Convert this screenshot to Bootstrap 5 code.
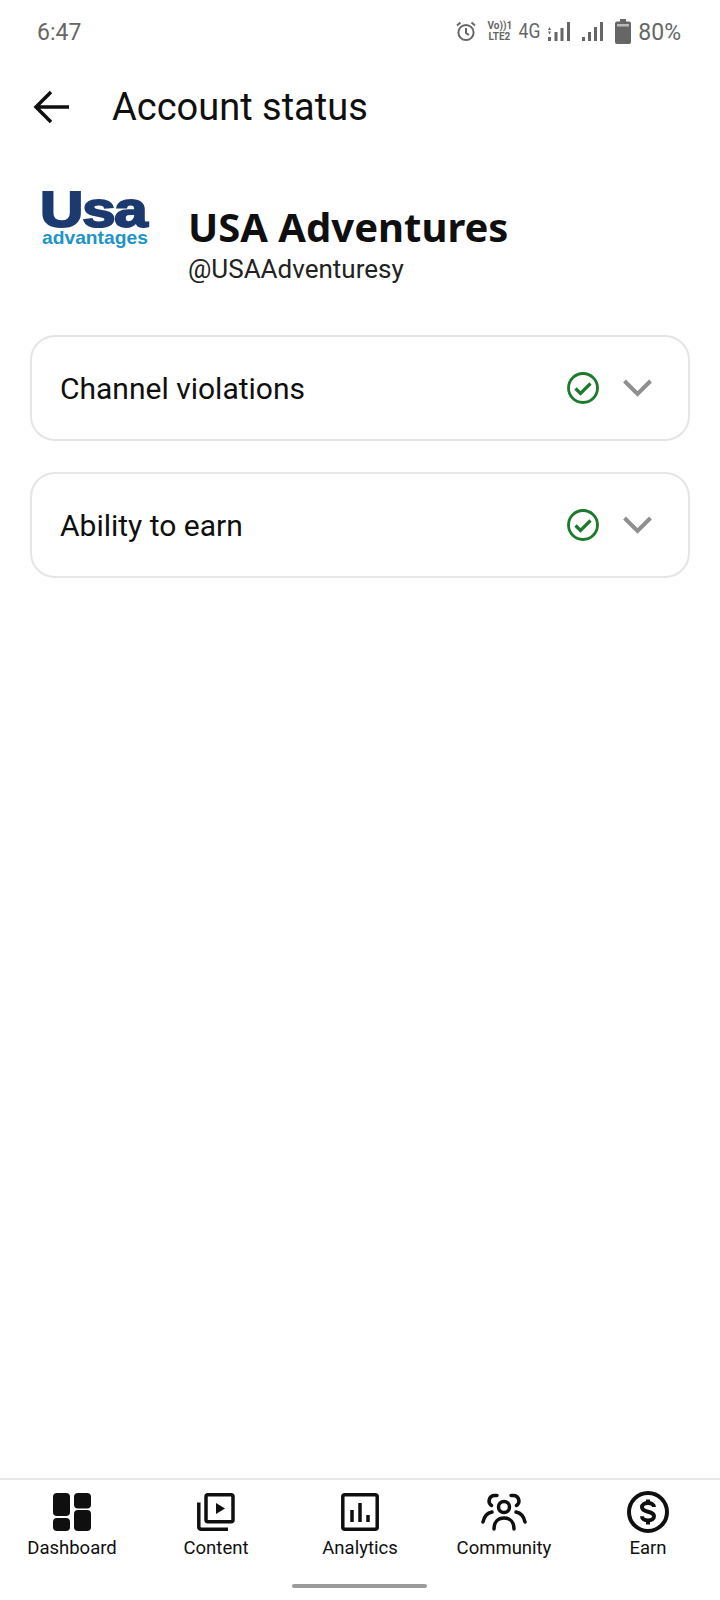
<!DOCTYPE html>
<html lang="en">
<head>
  <meta charset="UTF-8">
  <meta name="viewport" content="width=device-width, initial-scale=1.0">
  <title>Account status</title>
  <link href="https://cdn.jsdelivr.net/npm/bootstrap@5.3.3/dist/css/bootstrap.min.css" rel="stylesheet">
  <style>
    body { font-family: Roboto, sans-serif; color: #0f0f0f; background: #fff; width: 720px; height: 1600px; overflow: hidden; }
    .screen { height: 1600px; }

    /* status bar */
    .status-bar { height: 62px; padding: 0 39px 0 37px; color: #666; }
    .status-time { font-size: 23px; position: relative; top: 2px; }
    .status-pct { font-size: 23px; margin-left: 7px; position: relative; top: 2px; }
    .status-volte { font-size: 10px; font-weight: 700; line-height: 11px; width: 24px; margin-left: 10px; text-align: center; }
    .status-net { font-size: 20px; margin-left: 6px; margin-right: 6px; transform: scaleX(.88); }
    .signal-gap { margin-left: 12px; }
    .battery-gap { margin-left: 12px; }

    /* header */
    .top-head { height: 92px; padding-left: 33px; padding-bottom: 2px; }
    .head-title { font-size: 38px; line-height: 1; margin: 0 0 0 41px; font-weight: 400; }

    /* channel */
    .channel-row { height: 181px; padding: 0 0 0 38px; }
    .channel-logo { width: 118px; height: 118px; margin-right: 32px; }
    .logo-usa { font-family: "Liberation Sans", sans-serif; font-weight: 700; font-size: 50px; line-height: 38px; color: #1c3a70; letter-spacing: -1px; -webkit-text-stroke: 2px #1c3a70; transform: scaleX(1.2); transform-origin: left; margin-left: 2px; margin-top: 5px; }
    .logo-sub { font-family: "Liberation Sans", sans-serif; font-weight: 700; font-size: 18.500px; line-height: 18px; color: #1d94c9; transform: scaleX(1.04); transform-origin: left; margin-left: 4px; }
    .channel-text { margin-bottom: 6px; }
    .channel-name { font-family: "Noto Sans", sans-serif; font-weight: 700; font-size: 40px; line-height: 54px; }
    .channel-handle { font-size: 26px; line-height: 30px; color: #222; }

    /* status cards */
    .card-stack { padding: 0 30px 0 30px; gap: 31px; }
    .status-card { height: 106px; border: 2px solid #e5e5e5; border-radius: 25px; padding: 0 36px 0 28px; }
    .status-label { font-size: 30px; }

    /* bottom nav */
    .tab-bar { border-top: 2px solid #e5e5e5; height: 122px; }
    .tab-item { width: 144px; padding-top: 10px; font-size: 18.500px; }
    .tab-icon { height: 44px; }
    .tab-text { line-height: 22px; margin-top: 3px; }
    .home-line { left: 292px; width: 135px; height: 4px; bottom: 12px; background: #9a9a9a; border-radius: 2px; }
  </style>
</head>
<body>
  <div class="screen d-flex flex-column position-relative">

    <!-- status bar -->
    <div class="status-bar d-flex align-items-center justify-content-between">
      <span class="status-time">6:47</span>
      <div class="d-flex align-items-center">
        <svg width="22" height="22" viewBox="0 0 22 22" fill="none" stroke="#666" stroke-width="2"><circle cx="11" cy="12.500" r="7.600"/><path d="M11 8v5l3 2M2 5.500 5.500 2.500M20 5.500 16.500 2.500"/></svg>
        <div class="status-volte">Vo))1<br>LTE2</div>
        <span class="status-net">4G</span>
        <svg width="22" height="19" viewBox="0 0 22 19" fill="#666"><rect x="0" y="15" width="3" height="4"/><rect x="6.500" y="10" width="3" height="9"/><rect x="12.500" y="6" width="3" height="13"/><rect x="19" y="0" width="3" height="19"/><path d="M0 8h3L1.500 5zM0 9.500h3L1.500 12.500z"/></svg>
        <svg class="signal-gap" width="21" height="19" viewBox="0 0 21 19" fill="#666"><rect x="0" y="15" width="3" height="4"/><rect x="6" y="10" width="3" height="9"/><rect x="12" y="5" width="3" height="14"/><rect x="18" y="0" width="3" height="19"/></svg>
        <svg class="battery-gap" width="16" height="25" viewBox="0 0 16 25" fill="#666"><path d="M5 0h6v2.500h3a2 2 0 0 1 2 2V23a2 2 0 0 1-2 2H2a2 2 0 0 1-2-2V4.500a2 2 0 0 1 2-2h3z"/><rect x="2" y="5" width="12" height="2.500" fill="#bbb"/></svg>
        <span class="status-pct">80%</span>
      </div>
    </div>

    <!-- header -->
    <div class="top-head d-flex align-items-center">
      <svg width="38" height="34" viewBox="0 0 38 34" fill="none" stroke="#0f0f0f" stroke-width="3.500"><path d="M36 17H3M18 2 3 17l15 15"/></svg>
      <h1 class="head-title">Account status</h1>
    </div>

    <!-- channel -->
    <div class="channel-row d-flex align-items-center">
      <div class="channel-logo flex-shrink-0">
        <div class="logo-usa">Usa</div>
        <div class="logo-sub">advantages</div>
      </div>
      <div class="channel-text">
        <div class="channel-name">USA Adventures</div>
        <div class="channel-handle">@USAAdventuresy</div>
      </div>
    </div>

    <!-- cards -->
    <div class="card-stack d-flex flex-column">
      <div class="status-card d-flex align-items-center justify-content-between">
        <span class="status-label">Channel violations</span>
        <div class="d-flex align-items-center gap-4">
          <svg width="32" height="32" viewBox="0 0 32 32" fill="none" stroke="#1b7a2b" stroke-width="2.800"><circle cx="16" cy="16" r="14.500"/><path d="m8.500 16.500 5 5 10-10" stroke-width="3.200"/></svg>
          <svg width="29" height="18" viewBox="0 0 29 18" fill="none" stroke="#8f8f8f" stroke-width="4"><path d="m1.500 2 13 13 13-13"/></svg>
        </div>
      </div>
      <div class="status-card d-flex align-items-center justify-content-between">
        <span class="status-label">Ability to earn</span>
        <div class="d-flex align-items-center gap-4">
          <svg width="32" height="32" viewBox="0 0 32 32" fill="none" stroke="#1b7a2b" stroke-width="2.800"><circle cx="16" cy="16" r="14.500"/><path d="m8.500 16.500 5 5 10-10" stroke-width="3.200"/></svg>
          <svg width="29" height="18" viewBox="0 0 29 18" fill="none" stroke="#8f8f8f" stroke-width="4"><path d="m1.500 2 13 13 13-13"/></svg>
        </div>
      </div>
    </div>

    <!-- bottom nav -->
    <nav class="tab-bar d-flex mt-auto">
      <div class="tab-item d-flex flex-column align-items-center">
        <div class="tab-icon d-flex align-items-center">
          <svg width="38" height="38" viewBox="0 0 38 38" fill="#0f0f0f"><rect x="0" y="0" width="17" height="23" rx="4"/><rect x="21" y="0" width="17" height="15.500" rx="4"/><rect x="0" y="25" width="17" height="13" rx="4"/><rect x="21" y="17" width="17" height="21" rx="4"/></svg>
        </div>
        <span class="tab-text">Dashboard</span>
      </div>
      <div class="tab-item d-flex flex-column align-items-center">
        <div class="tab-icon d-flex align-items-center">
          <svg width="38" height="38" viewBox="0 0 38 38" fill="none" stroke="#0f0f0f" stroke-width="3.500"><rect x="9" y="1.800" width="27" height="27" rx="2"/><path d="M1.800 9.500V34a2.500 2.500 0 0 0 2.500 2.200H31"/><path d="M19 10v11l9-5.500z" fill="#0f0f0f" stroke="none"/></svg>
        </div>
        <span class="tab-text">Content</span>
      </div>
      <div class="tab-item d-flex flex-column align-items-center">
        <div class="tab-icon d-flex align-items-center">
          <svg width="38" height="38" viewBox="0 0 38 38" fill="none" stroke="#0f0f0f" stroke-width="3.500"><rect x="1.800" y="1.800" width="34.400" height="34.400" rx="2"/><path d="M11 17v12M19 10v19M27 22v7"/></svg>
        </div>
        <span class="tab-text">Analytics</span>
      </div>
      <div class="tab-item d-flex flex-column align-items-center">
        <div class="tab-icon d-flex align-items-center">
          <svg width="46" height="38" viewBox="0 0 46 38" fill="none" stroke="#0f0f0f" stroke-width="3.500" stroke-linecap="round"><circle cx="23" cy="14" r="5.500"/><path d="M13 36c0-7 4-11 10-11s10 4 10 11"/><path d="M16 2.500h-3a5.500 5.500 0 0 0-2.500 10M30 2.500h3a5.500 5.500 0 0 1 2.500 10"/><path d="M2 29c1-5 4-9 9-10M44 29c-1-5-4-9-9-10"/></svg>
        </div>
        <span class="tab-text">Community</span>
      </div>
      <div class="tab-item d-flex flex-column align-items-center">
        <div class="tab-icon d-flex align-items-center">
          <svg width="42" height="42" viewBox="0 0 42 42" fill="none" stroke="#0f0f0f" stroke-width="4"><circle cx="21" cy="21" r="19"/><path d="M27 16c0-2.500-2.500-4-6-4s-6 1.600-6 4.300c0 6 12 3 12 9 0 2.700-2.600 4.200-6 4.200s-6-1.600-6-4.200M21 8.500v3.500M21 30v3.500"/></svg>
        </div>
        <span class="tab-text">Earn</span>
      </div>
    </nav>
    <div class="home-line position-absolute"></div>
  </div>

  <script src="https://cdn.jsdelivr.net/npm/bootstrap@5.3.3/dist/js/bootstrap.bundle.min.js"></script>
</body>
</html>
